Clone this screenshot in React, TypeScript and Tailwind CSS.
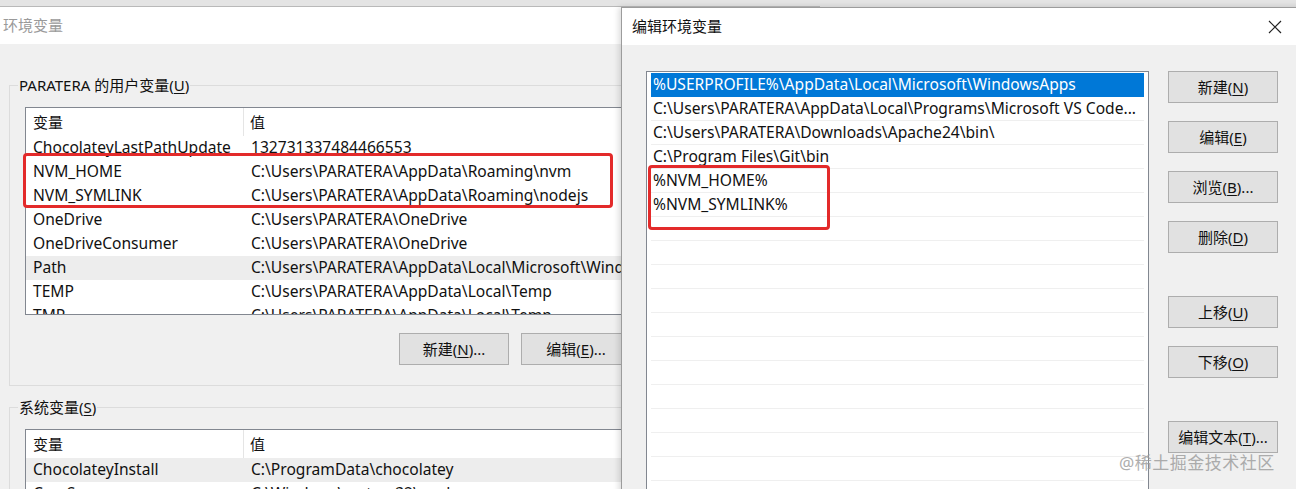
import React from "react";

const font = { fontFamily: '"Noto Sans", "Noto Sans CJK SC", sans-serif' };

function U({ c }: { c: string }) {
  return <span className="underline underline-offset-2">{c}</span>;
}

function Btn({ children, className = "" }: { children: React.ReactNode; className?: string }) {
  return (
    <div
      className={
        "flex h-[32px] w-[110px] shrink-0 items-center justify-center border border-[#adadad] bg-[#e1e1e1] text-[15px] text-[#111] " +
        className
      }
    >
      {children}
    </div>
  );
}

type Row = { k: string; v: string; hl?: boolean };

const userRows: Row[] = [
  { k: "ChocolateyLastPathUpdate", v: "132731337484466553" },
  { k: "NVM_HOME", v: "C:\\Users\\PARATERA\\AppData\\Roaming\\nvm" },
  { k: "NVM_SYMLINK", v: "C:\\Users\\PARATERA\\AppData\\Roaming\\nodejs" },
  { k: "OneDrive", v: "C:\\Users\\PARATERA\\OneDrive" },
  { k: "OneDriveConsumer", v: "C:\\Users\\PARATERA\\OneDrive" },
  { k: "Path", v: "C:\\Users\\PARATERA\\AppData\\Local\\Microsoft\\WindowsApps;", hl: true },
  { k: "TEMP", v: "C:\\Users\\PARATERA\\AppData\\Local\\Temp" },
  { k: "TMP", v: "C:\\Users\\PARATERA\\AppData\\Local\\Temp" },
];

const sysRows: Row[] = [
  { k: "ChocolateyInstall", v: "C:\\ProgramData\\chocolatey", hl: true },
  { k: "ComSpec", v: "C:\\Windows\\system32\\cmd.exe" },
];

function ListView({ rows, height }: { rows: Row[]; height: number }) {
  return (
    <div className="overflow-hidden border border-[#828790] bg-white" style={{ height }}>
      <div className="flex h-[28px] items-center text-[15px] text-[#111]">
        <div className="w-[218px] shrink-0 border-r border-[#e5e5e5] pl-[7px] leading-[28px]">变量</div>
        <div className="pl-[6px]">值</div>
      </div>
      {rows.map((r) => (
        <div
          key={r.k}
          className={"flex h-[24px] items-center whitespace-nowrap text-[15.6px] text-[#111] " + (r.hl ? "bg-[#ededed]" : "")}
        >
          <div className="w-[218px] shrink-0 pl-[7px]">{r.k}</div>
          <div className="pl-[7px]">{r.v}</div>
        </div>
      ))}
    </div>
  );
}

function GroupBox({ label, children, className = "" }: { label: React.ReactNode; children: React.ReactNode; className?: string }) {
  return (
    <div className={"relative border border-[#dcdcdc] " + className}>
      <div className="absolute left-[8px] top-[-12px] bg-[#f0f0f0] px-[1px] text-[15px] leading-[22px] text-[#111]">
        {label}
      </div>
      {children}
    </div>
  );
}

const pathRows = [
  "%USERPROFILE%\\AppData\\Local\\Microsoft\\WindowsApps",
  "C:\\Users\\PARATERA\\AppData\\Local\\Programs\\Microsoft VS Code...",
  "C:\\Users\\PARATERA\\Downloads\\Apache24\\bin\\",
  "C:\\Program Files\\Git\\bin",
  "%NVM_HOME%",
  "%NVM_SYMLINK%",
];

export default function App() {
  const empties = Array.from({ length: 12 });
  return (
    <div className="relative h-[489px] w-[1296px] overflow-hidden bg-[#e4e4e4]" style={font}>
      {/* Left window */}
      <div className="absolute left-0 top-[6px] flex h-[520px] w-[820px] flex-col border-t border-[#b9b9b9] bg-[#f0f0f0]">
        <div className="flex h-[37px] shrink-0 items-center bg-white pl-[3px] text-[15px] text-[#9a9a9a]">环境变量</div>
        <div className="flex flex-col pl-[9px] pt-[41px]">
          <GroupBox
            className="h-[301px] w-[800px] px-[15px] pt-[21px]"
            label={
              <>
                PARATERA 的用户变量(<U c="U" />)
              </>
            }
          >
            <ListView rows={userRows} height={208} />
            <div className="flex gap-[12px] pl-[374px] pt-[18px]">
              <Btn>
                新建(<U c="N" />)...
              </Btn>
              <Btn>
                编辑(<U c="E" />)...
              </Btn>
            </div>
          </GroupBox>
          <div className="h-[21px]" />
          <GroupBox
            className="h-[200px] w-[800px] px-[15px] pt-[21px]"
            label={
              <>
                系统变量(<U c="S" />)
              </>
            }
          >
            <ListView rows={sysRows} height={120} />
          </GroupBox>
        </div>
      </div>

      {/* Red highlight box, left */}
      <div className="absolute left-[23px] top-[153px] h-[55px] w-[590px] rounded-[4px] border-[3px] border-[#e32a2a]" />

      {/* Right dialog */}
      <div className="absolute left-[621px] top-[7px] flex h-[500px] w-[690px] flex-col border-l border-t border-[#9c9c9c] bg-[#f0f0f0] shadow-[-2px_0_6px_rgba(0,0,0,0.15)]">
        <div className="flex h-[37px] shrink-0 items-center justify-between bg-white pl-[10px] pr-[32px] text-[15px] text-[#111]">
          <span>编辑环境变量</span>
          <svg width="14" height="14" viewBox="0 0 14 14" className="mr-[-3px]">
            <path d="M1 1 L13 13 M13 1 L1 13" stroke="#222" strokeWidth="1.2" fill="none" />
          </svg>
        </div>
        <div className="flex pl-[24px] pt-[26px]">
          <div className="h-[430px] w-[503px] shrink-0 overflow-hidden border border-[#828790] bg-white px-[4px] pt-[1px]">
            {pathRows.map((p, i) => (
              <div
                key={p}
                className={
                  "flex h-[24px] items-center whitespace-nowrap border-b pl-[2px] text-[15.6px] " +
                  (i === 0 ? "border-[#0078d7] bg-[#0078d7] text-white" : "border-[#efefef] text-[#111]")
                }
              >
                {p}
              </div>
            ))}
            {empties.map((_, i) => (
              <div key={i} className="h-[24px] border-b border-[#efefef]" />
            ))}
          </div>
          <div className="flex flex-col pl-[19px] pt-[0px]">
            <Btn>
              新建(<U c="N" />)
            </Btn>
            <Btn className="mt-[18px]">
              编辑(<U c="E" />)
            </Btn>
            <Btn className="mt-[18px]">
              浏览(<U c="B" />)...
            </Btn>
            <Btn className="mt-[18px]">
              删除(<U c="D" />)
            </Btn>
            <Btn className="mt-[43px]">
              上移(<U c="U" />)
            </Btn>
            <Btn className="mt-[18px]">
              下移(<U c="O" />)
            </Btn>
            <Btn className="mt-[43px]">
              编辑文本(<U c="T" />)...
            </Btn>
          </div>
        </div>
      </div>

      {/* Red highlight box, right */}
      <div className="absolute left-[648px] top-[165px] h-[65px] w-[182px] rounded-[4px] border-[3px] border-[#e32a2a]" />

      {/* Watermark */}
      <div className="absolute left-[1119px] top-[451px] text-[17px] leading-[24px] tracking-[0.5px] text-[#9a9a9a] opacity-80">
        @稀土掘金技术社区
      </div>
    </div>
  );
}
